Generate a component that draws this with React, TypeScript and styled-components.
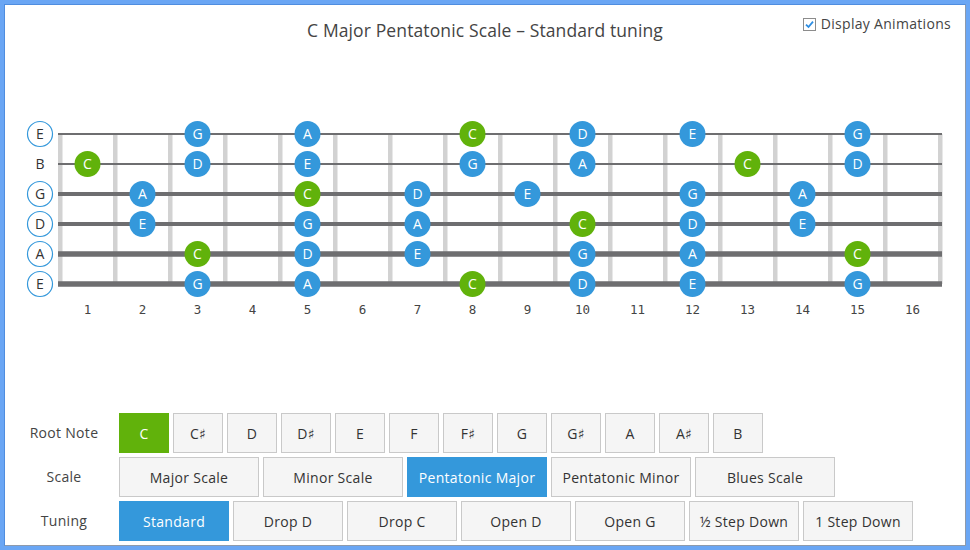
import React, { useState } from "react";
import styled, { createGlobalStyle, css } from "styled-components";

const FONT = `"Open Sans", "Noto Sans", "DejaVu Sans", sans-serif`;

const GlobalStyle = createGlobalStyle`
  html, body { margin: 0; padding: 0; }
  body {
    background: #6aa6f4;
    font-family: ${FONT};
  }
`;

const NOTE_NAMES = ["C", "C♯", "D", "D♯", "E", "F", "F♯", "G", "G♯", "A", "A♯", "B"];

type ScaleDef = { id: string; label: string; title: string; steps: number[] };
const SCALES: ScaleDef[] = [
  { id: "major", label: "Major Scale", title: "Major Scale", steps: [0, 2, 4, 5, 7, 9, 11] },
  { id: "minor", label: "Minor Scale", title: "Minor Scale", steps: [0, 2, 3, 5, 7, 8, 10] },
  { id: "pmaj", label: "Pentatonic Major", title: "Major Pentatonic Scale", steps: [0, 2, 4, 7, 9] },
  { id: "pmin", label: "Pentatonic Minor", title: "Minor Pentatonic Scale", steps: [0, 3, 5, 7, 10] },
  { id: "blues", label: "Blues Scale", title: "Blues Scale", steps: [0, 3, 5, 6, 7, 10] },
];

type TuningDef = { id: string; label: string; title: string; notes: number[] };
// high string first
const TUNINGS: TuningDef[] = [
  { id: "std", label: "Standard", title: "Standard tuning", notes: [4, 11, 7, 2, 9, 4] },
  { id: "dropd", label: "Drop D", title: "Drop D tuning", notes: [4, 11, 7, 2, 9, 2] },
  { id: "dropc", label: "Drop C", title: "Drop C tuning", notes: [2, 9, 5, 0, 7, 0] },
  { id: "opend", label: "Open D", title: "Open D tuning", notes: [2, 9, 6, 2, 9, 2] },
  { id: "openg", label: "Open G", title: "Open G tuning", notes: [2, 11, 7, 2, 7, 2] },
  { id: "half", label: "½ Step Down", title: "½ Step Down tuning", notes: [3, 10, 6, 1, 8, 3] },
  { id: "whole", label: "1 Step Down", title: "1 Step Down tuning", notes: [2, 9, 5, 0, 7, 2] },
];

const STRING_WIDTHS = [2, 2, 4, 4, 5.5, 5.5];
const FRETS = 16;
const FRET_W = 55;
const NUT_X = 60;
const TOP_Y = 134;
const STRING_GAP = 30;
const BLUE = "#3498db";
const GREEN = "#61b20b";

const Page = styled.div`
  padding: 4px;
`;

const Panel = styled.div`
  width: 960px;
  height: 540px;
  background: #ffffff;
  border: 1px solid;
  border-color: #4f8ddf #8e9aab #8e9aab #4f8ddf;
  display: flex;
  flex-direction: column;
`;

const Header = styled.header`
  height: 55px;
  box-sizing: border-box;
  padding: 9px 14px 0 14px;
  display: grid;
  grid-template-columns: 1fr auto 1fr;
  align-items: start;
`;

const Title = styled.h1`
  grid-column: 2;
  margin: 3.5px 0 0 0;
  font-size: 17.5px;
  line-height: 24px;
  letter-spacing: 0.12px;
  font-weight: 400;
  color: #444444;
  white-space: nowrap;
`;

const Toggle = styled.label`
  grid-column: 3;
  justify-self: end;
  display: flex;
  align-items: center;
  gap: 5px;
  font-size: 14px;
  line-height: 20px;
  letter-spacing: 0.3px;
  color: #444444;
  cursor: pointer;
  user-select: none;
`;

const CheckBox = styled.span`
  width: 11px;
  height: 11px;
  border: 1px solid #8c8c8c;
  background: #ffffff;
  display: flex;
  align-items: center;
  justify-content: center;
`;

const Board = styled.svg`
  display: block;
  flex: none;
`;

const Controls = styled.div`
  margin-top: auto;
  padding: 0 0 4px 9px;
  display: grid;
  grid-template-columns: 100px auto;
  column-gap: 5px;
  row-gap: 4px;
  justify-content: start;
`;

const RowLabel = styled.div`
  font-size: 14px;
  line-height: 40px;
  letter-spacing: 0.3px;
  text-align: center;
  color: #444444;
`;

const ButtonRow = styled.div`
  display: flex;
  gap: 4px;
`;

const OptionButton = styled.button<{ $w: number; $active: boolean; $tone: "green" | "blue" }>`
  width: ${(p) => p.$w}px;
  height: 40px;
  box-sizing: border-box;
  padding: 0;
  font-family: ${FONT};
  font-size: 14px;
  letter-spacing: 0.3px;
  color: #333333;
  background: #f5f5f5;
  border: 1px solid #c9c9c9;
  border-radius: 0;
  cursor: pointer;
  ${(p) =>
    p.$active &&
    css`
      color: #ffffff;
      background: ${p.$tone === "green" ? GREEN : BLUE};
      border-color: ${p.$tone === "green" ? GREEN : BLUE};
    `}
`;

export default function App() {
  const [root, setRoot] = useState(0);
  const [scaleId, setScaleId] = useState("pmaj");
  const [tuningId, setTuningId] = useState("std");
  const [anim, setAnim] = useState(true);

  const scale = SCALES.find((s) => s.id === scaleId)!;
  const tuning = TUNINGS.find((t) => t.id === tuningId)!;
  const inScale = (n: number) => scale.steps.includes((n - root + 12) % 12);

  const stringY = (i: number) => TOP_Y + i * STRING_GAP;
  const fretCenter = (f: number) => NUT_X + (f - 0.5) * FRET_W;
  const bottomY = stringY(5);
  const endX = NUT_X + FRETS * FRET_W;

  return (
    <>
      <GlobalStyle />
      <Page>
        <Panel>
          <Header>
            <Title>
              {NOTE_NAMES[root]} {scale.title} – {tuning.title}
            </Title>
            <Toggle onClick={() => setAnim(!anim)}>
              <CheckBox>
                {anim && (
                  <svg width="9" height="9" viewBox="0 0 9 9">
                    <path d="M1 4.6 L3.5 7 L8 1.6" fill="none" stroke="#2e8ee3" strokeWidth="1.8" />
                  </svg>
                )}
              </CheckBox>
              Display Animations
            </Toggle>
          </Header>
          <Board width={960} height={270} viewBox="5 60 960 270">
            {Array.from({ length: FRETS + 1 }, (_, f) => (
              <rect
                key={"fret" + f}
                x={NUT_X + f * FRET_W - 2}
                y={TOP_Y}
                width={4.5}
                height={bottomY - TOP_Y}
                fill="#d2d2d2"
              />
            ))}
            {tuning.notes.map((_, i) => (
              <rect
                key={"str" + i}
                x={58}
                y={stringY(i) - STRING_WIDTHS[i] / 2}
                width={endX + 2 - 58}
                height={STRING_WIDTHS[i]}
                fill="#6e6e70"
              />
            ))}
            {tuning.notes.map((open, i) => (
              <g key={"open" + i}>
                {inScale(open) && (
                  <circle
                    cx={40}
                    cy={stringY(i)}
                    r={12.5}
                    fill="#ffffff"
                    stroke={open === root ? GREEN : BLUE}
                    strokeWidth={1.2}
                  />
                )}
                <text
                  x={40}
                  y={stringY(i) + 5}
                  textAnchor="middle"
                  fontFamily={FONT}
                  fontSize={14}
                  fill="#333333"
                >
                  {NOTE_NAMES[open]}
                </text>
              </g>
            ))}
            {tuning.notes.map((open, i) =>
              Array.from({ length: FRETS }, (_, k) => {
                const f = k + 1;
                const n = (open + f) % 12;
                if (!inScale(n)) return null;
                return (
                  <g key={`n${i}-${f}`}>
                    <circle cx={fretCenter(f)} cy={stringY(i)} r={13} fill={n === root ? GREEN : BLUE} />
                    <text
                      x={fretCenter(f)}
                      y={stringY(i) + 5}
                      textAnchor="middle"
                      fontFamily={FONT}
                      fontSize={14}
                      fill="#ffffff"
                    >
                      {NOTE_NAMES[n]}
                    </text>
                  </g>
                );
              })
            )}
            {Array.from({ length: FRETS }, (_, k) => (
              <text
                key={"num" + k}
                x={fretCenter(k + 1)}
                y={314}
                textAnchor="middle"
                fontFamily="'DejaVu Sans Mono', monospace"
                fontSize={12.5}
                fill="#444444"
              >
                {k + 1}
              </text>
            ))}
          </Board>
          <Controls>
            <RowLabel>Root Note</RowLabel>
            <ButtonRow>
              {NOTE_NAMES.map((name, idx) => (
                <OptionButton
                  key={name}
                  $w={50}
                  $tone="green"
                  $active={idx === root}
                  onClick={() => setRoot(idx)}
                >
                  {name}
                </OptionButton>
              ))}
            </ButtonRow>
            <RowLabel>Scale</RowLabel>
            <ButtonRow>
              {SCALES.map((s) => (
                <OptionButton
                  key={s.id}
                  $w={140}
                  $tone="blue"
                  $active={s.id === scaleId}
                  onClick={() => setScaleId(s.id)}
                >
                  {s.label}
                </OptionButton>
              ))}
            </ButtonRow>
            <RowLabel>Tuning</RowLabel>
            <ButtonRow>
              {TUNINGS.map((t) => (
                <OptionButton
                  key={t.id}
                  $w={110}
                  $tone="blue"
                  $active={t.id === tuningId}
                  onClick={() => setTuningId(t.id)}
                >
                  {t.label}
                </OptionButton>
              ))}
            </ButtonRow>
          </Controls>
        </Panel>
      </Page>
    </>
  );
}
